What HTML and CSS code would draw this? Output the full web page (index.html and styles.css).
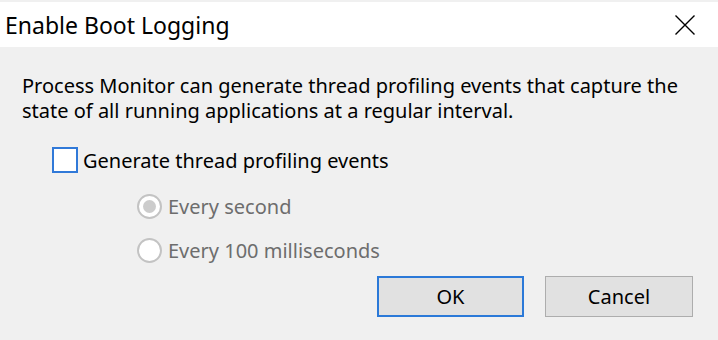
FILE: index.html
```html
<!DOCTYPE html>
<html>
<head>
<meta charset="utf-8">
<link rel="stylesheet" href="styles.css">
</head>
<body>
<div class="dialog">
  <div class="titlebar">
    <span class="title">Enable Boot Logging</span>
    <svg class="close" width="20" height="20" viewBox="0 0 20 20"><path d="M0.5 0.5 L19.5 19.5 M19.5 0.5 L0.5 19.5" stroke="#000" stroke-width="1.4" fill="none"/></svg>
  </div>
  <div class="content">
    <p class="intro">Process Monitor can generate thread profiling events that capture the state of all running applications at a regular interval.</p>
    <div class="check-row">
      <span class="checkbox"></span>
      <span class="label">Generate thread profiling events</span>
    </div>
    <div class="radios">
      <div class="radio-row">
        <span class="radio checked"></span>
        <span class="label disabled">Every second</span>
      </div>
      <div class="radio-row">
        <span class="radio"></span>
        <span class="label disabled">Every 100 milliseconds</span>
      </div>
    </div>
    <div class="buttons">
      <button class="btn default">OK</button>
      <button class="btn">Cancel</button>
    </div>
  </div>
</div>
</body>
</html>
```
FILE: styles.css
```css
html, body {
  margin: 0;
  padding: 0;
  background: #f0f0f0;
}
body {
  font-family: "Noto Sans", "Open Sans", sans-serif;
  color: #000;
  width: 718px;
  height: 340px;
  overflow: hidden;
}
.dialog {
  padding-top: 2px;
}
.titlebar {
  height: 45px;
  background: #fff;
  display: flex;
  align-items: center;
  justify-content: space-between;
  padding: 0 23px 0 5px;
}
.title {
  font-size: 23px;
  line-height: 28px;
}
.close {
  display: block;
}
.content {
  padding: 0 0 0 22px;
}
.intro {
  margin: 26px 0 0 0;
  font-size: 20px;
  line-height: 25px;
  width: 692px;
}
.check-row {
  display: flex;
  align-items: center;
  margin: 24px 0 0 30px;
  height: 26px;
}
.checkbox {
  width: 22px;
  height: 22px;
  border: 2px solid #3079d8;
  background: #fff;
  margin-right: 5px;
}
.label {
  font-size: 20px;
  line-height: 25px;
}
.label.disabled {
  color: #6d6d6d;
}
.radios {
  margin: 21px 0 0 115px;
  display: flex;
  flex-direction: column;
  gap: 19px;
}
.radio-row {
  display: flex;
  align-items: center;
  height: 25px;
}
.radio {
  width: 21px;
  height: 21px;
  border: 2px solid #c3c3c3;
  border-radius: 50%;
  background: #fff;
  margin-right: 6px;
  box-sizing: content-box;
  display: flex;
  align-items: center;
  justify-content: center;
}
.radio.checked::after {
  content: "";
  width: 13px;
  height: 13px;
  border-radius: 50%;
  background: #cccccc;
}
.buttons {
  display: flex;
  gap: 21px;
  justify-content: flex-end;
  margin: 13px 25px 0 0;
}
.btn {
  width: 148px;
  height: 41px;
  box-sizing: border-box;
  background: #e1e1e1;
  border: 1px solid #adadad;
  font-family: "Noto Sans", "Open Sans", sans-serif;
  font-size: 20px;
  color: #000;
  padding: 0;
}
.btn.default {
  border: 2px solid #2b79d8;
  width: 147px;
}
```
